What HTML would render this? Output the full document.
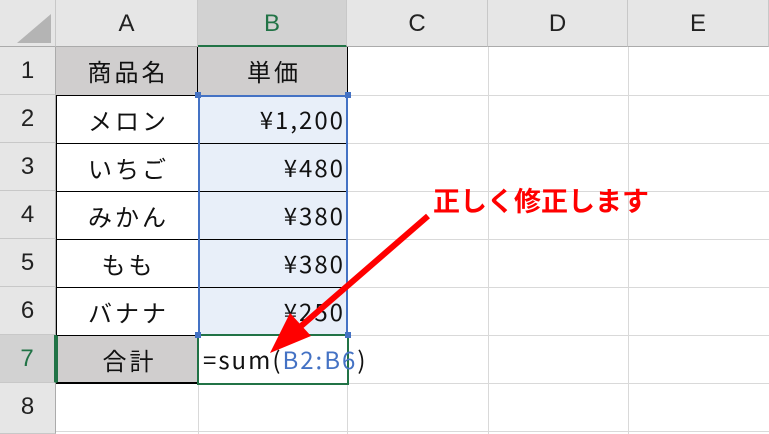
<!DOCTYPE html><html><head><meta charset="utf-8"><style>
body{margin:0;width:769px;height:434px;overflow:hidden;background:#fff;font-family:"Liberation Sans","Noto Sans CJK JP",sans-serif;position:relative}
.a{position:absolute;box-sizing:border-box}
.ch{top:0;height:47px;background:#e6e6e6;border-right:1px solid #c8c8c8;border-bottom:1px solid #ababab;font-size:24px;text-align:center;line-height:47px;color:#222}
.rh{left:0;width:56px;background:#e6e6e6;border-bottom:1px solid #c8c8c8;border-right:1px solid #ababab;font-size:24px;text-align:center;line-height:48px;color:#222}
.hl{position:absolute;left:56px;right:0;height:1px;background:#d9d9d9}
.vl{position:absolute;top:47px;bottom:0;width:1px;background:#d9d9d9}
.c{height:48px;line-height:48px;font-size:24px;font-family:"Noto Sans CJK JP",sans-serif;color:#111;letter-spacing:3px;white-space:nowrap}
.n{letter-spacing:2px}
</style></head><body>
<div class="a ch" style="left:0;width:56px;background:#e6e6e6"></div>
<svg class="a" style="left:13px;top:12px" width="40" height="32"><polygon points="38,2 38,31 4,31" fill="#b4b4b4"/></svg>
<div class="a ch" style="left:56px;width:142px">A</div>
<div class="a ch" style="left:198px;width:149px;background:#d2d2d2;color:#217346;border-bottom:2px solid #217346">B</div>
<div class="a ch" style="left:347px;width:141px">C</div>
<div class="a ch" style="left:488px;width:140px">D</div>
<div class="a ch" style="left:628px;width:141px">E</div>
<div class="hl" style="top:95px"></div><div class="hl" style="top:143px"></div><div class="hl" style="top:191px"></div><div class="hl" style="top:239px"></div><div class="hl" style="top:287px"></div><div class="hl" style="top:335px"></div><div class="hl" style="top:383px"></div><div class="hl" style="top:431px"></div>
<div class="vl" style="left:198px"></div><div class="vl" style="left:347px"></div><div class="vl" style="left:488px"></div><div class="vl" style="left:628px"></div>
<div class="a rh" style="top:47px;height:48px">1</div>
<div class="a rh" style="top:95px;height:48px">2</div>
<div class="a rh" style="top:143px;height:48px">3</div>
<div class="a rh" style="top:191px;height:48px">4</div>
<div class="a rh" style="top:239px;height:48px">5</div>
<div class="a rh" style="top:287px;height:48px">6</div>
<div class="a rh" style="top:335px;height:48px;background:#d2d2d2;color:#217346;border-right:2px solid #217346">7</div>
<div class="a rh" style="top:383px;height:51px">8</div>
<div class="a" style="left:56px;top:47px;width:292px;height:337px;border:1px solid #000;border-top:none"></div>
<div class="a c" style="left:56px;top:47px;width:142px;background:#d0cece;text-align:center;border-right:1px solid #000;padding-left:3px">商品名</div>
<div class="a c" style="left:198px;top:47px;width:149px;background:#d0cece;text-align:center;padding-left:3px">単価</div>
<div class="a" style="left:198px;top:95px;width:150px;height:241px;background:#e8eff9;border:2px solid #4472c4"></div>
<div class="a c" style="left:56px;top:95px;width:142px;text-align:center;border-top:1px solid #000;padding-left:3px">メロン</div>
<div class="a c" style="left:56px;top:143px;width:142px;text-align:center;border-top:1px solid #000;padding-left:3px">いちご</div>
<div class="a c" style="left:56px;top:191px;width:142px;text-align:center;border-top:1px solid #000;padding-left:3px">みかん</div>
<div class="a c" style="left:56px;top:239px;width:142px;text-align:center;border-top:1px solid #000;padding-left:3px">もも</div>
<div class="a c" style="left:56px;top:287px;width:142px;text-align:center;border-top:1px solid #000;padding-left:3px">バナナ</div>
<div class="a c" style="left:56px;top:335px;width:142px;text-align:center;background:#d0cece;border-top:1px solid #000;border-bottom:1px solid #000;border-left:2px solid #217346;padding-left:3px">合計</div>
<div class="a" style="left:200px;top:143px;width:146px;height:1px;background:#000"></div>
<div class="a" style="left:200px;top:191px;width:146px;height:1px;background:#000"></div>
<div class="a" style="left:200px;top:239px;width:146px;height:1px;background:#000"></div>
<div class="a" style="left:200px;top:287px;width:146px;height:1px;background:#000"></div>
<div class="a c n" style="left:198px;top:95px;width:147px;text-align:right">¥1,200</div>
<div class="a c n" style="left:198px;top:143px;width:147px;text-align:right">¥480</div>
<div class="a c n" style="left:198px;top:191px;width:147px;text-align:right">¥380</div>
<div class="a c n" style="left:198px;top:239px;width:147px;text-align:right">¥380</div>
<div class="a c n" style="left:198px;top:287px;width:147px;text-align:right">¥250</div>
<div class="a" style="left:197px;top:334px;width:152px;height:51px;border:2px solid #217346;background:#fff"></div>
<div class="a" style="left:195px;top:332px;width:6px;height:6px;background:#4472c4"></div>
<div class="a" style="left:345px;top:332px;width:6px;height:6px;background:#4472c4"></div>
<div class="a" style="left:195px;top:92px;width:6px;height:6px;background:#4472c4"></div>
<div class="a" style="left:345px;top:92px;width:6px;height:6px;background:#4472c4"></div>
<div class="a c n" style="left:203px;top:335px">=sum(<span style="color:#4472c4">B2:B6</span>)</div>
<div class="a" style="left:433px;top:180px;font-size:27px;font-weight:bold;color:#f00;font-family:'Noto Sans CJK JP',sans-serif;white-space:nowrap;line-height:40px">正しく修正します</div>
<svg class="a" style="left:0;top:0" width="769" height="434"><line x1="428" y1="216" x2="300" y2="327" stroke="#f00" stroke-width="6"/><polygon points="270,353 290,313 311,336" fill="#f00"/></svg>
</body></html>
